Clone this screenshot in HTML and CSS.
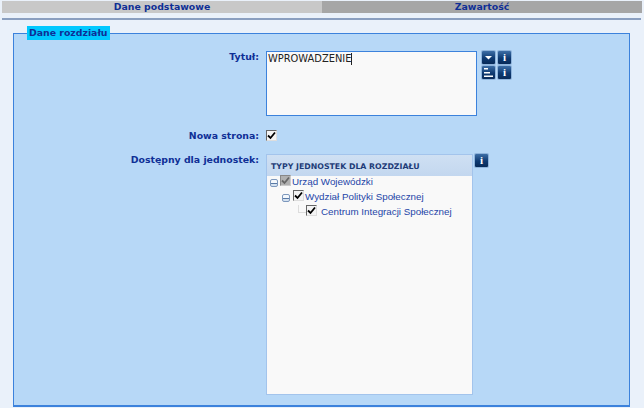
FILE: index.html
```html
<!DOCTYPE html>
<html lang="pl">
<head>
<meta charset="utf-8">
<title>Dane rozdziału</title>
<link rel="stylesheet" href="styles.css">
</head>
<body>
<div class="tabs">
  <div class="tab tab-active">Dane podstawowe</div>
  <div class="tab tab-other">Zawartość</div>
</div>
<div class="rule"></div>
<fieldset class="group">
  <legend class="legend">Dane rozdziału</legend>
  <div class="row row-title">
    <div class="label">Tytuł:</div>
    <div class="textarea"><span class="value">WPROWADZENIE</span><span class="caret"></span></div>
    <div class="tools">
      <div class="tool-row">
        <span class="btn"><svg width="13" height="13" viewBox="0 0 13 13"><path d="M3 5h7L6.500 8.500z" fill="#fff"/></svg></span>
        <span class="btn btn-i">i</span>
      </div>
      <div class="tool-row">
        <span class="btn"><svg width="13" height="13" viewBox="0 0 13 13"><path d="M2 2h4v1.500H2zM2 6h6v1.500H2zM2 9.500h9V11H2z" fill="#fff"/></svg></span>
        <span class="btn btn-i">i</span>
      </div>
    </div>
  </div>
  <div class="row row-new">
    <div class="label">Nowa strona:</div>
    <span class="check"><svg width="9" height="9" viewBox="0 0 9 9"><path d="M1 4.500 3.500 7 8 1.500" fill="none" stroke="#000" stroke-width="1.800"/></svg></span>
  </div>
  <div class="row row-tree">
    <div class="label">Dostępny dla jednostek:</div>
    <div class="panel">
      <div class="panel-head">TYPY JEDNOSTEK DLA ROZDZIAŁU</div>
      <div class="panel-body">
        <div class="node">
          <span class="exp"></span>
          <span class="check check-off"><svg width="9" height="9" viewBox="0 0 9 9"><path d="M1 4.500 3.500 7 8 1.500" fill="none" stroke="#666" stroke-width="1.800"/></svg></span>
          <span class="node-text">Urząd Wojewódzki</span>
        </div>
        <div class="node node-2">
          <span class="exp"></span>
          <span class="check"><svg width="9" height="9" viewBox="0 0 9 9"><path d="M1 4.500 3.500 7 8 1.500" fill="none" stroke="#000" stroke-width="1.800"/></svg></span>
          <span class="node-text">Wydział Polityki Społecznej</span>
        </div>
        <div class="node node-3">
          <span class="leaf"></span>
          <span class="check"><svg width="9" height="9" viewBox="0 0 9 9"><path d="M1 4.500 3.500 7 8 1.500" fill="none" stroke="#000" stroke-width="1.800"/></svg></span>
          <span class="node-text node-text-3">Centrum Integracji Społecznej</span>
        </div>
      </div>
    </div>
    <span class="btn btn-i btn-panel">i</span>
  </div>
</fieldset>
</body>
</html>
```
FILE: styles.css
```css
* { box-sizing: border-box; }
html, body { margin: 0; height: 408px; overflow: hidden; }
body {
  background: #eaf1fa;
  padding: 1px 2px 0 2px;
  font-family: "DejaVu Sans", Verdana, sans-serif;
  font-size: 9.35px;
  color: #0f2f96;
}
.tabs { display: flex; height: 12px; }
.tab {
  flex: 1;
  text-align: center;
  font-weight: bold;
  line-height: 12px;
}
.tab-active { background: #c8c8c8; }
.tab-other { background: #a6a6a6; }
.rule { height: 2px; margin-top: 5px; margin-right: 1px; background: #8a9fc0; }
.group {
  margin: 6px 12px 0 11px;
  padding: 0;
  height: 381px;
  border: 1px solid #3c82dc;
  border-bottom-width: 2px;
  background: #b7d8f7;
  min-width: 0;
}
.legend {
  margin-left: 13px;
  padding: 0 2px;
  height: 14px;
  line-height: 13px;
  font-size: 9.35px;
  font-weight: bold;
  background: #00c8ff;
}
.row { display: flex; align-items: flex-start; }
.label {
  width: 245px;
  margin-right: 7px;
  text-align: right;
  font-weight: bold;
  line-height: 11px;
}
.row-title { margin-top: 11px; }
.textarea {
  width: 211px;
  height: 65px;
  background: #f9f9f9;
  border: 1px solid #3c82dc;
  padding: 1px;
  font-size: 9.9px;
  color: #222;
  line-height: 12px;
  display: flex;
  align-items: flex-start;
}
.caret { width: 1px; height: 12px; background: #222; }
.tools { margin-left: 5px; display: flex; flex-direction: column; gap: 2px; }
.tool-row { display: flex; gap: 3px; }
.btn {
  width: 13px;
  height: 13px;
  display: flex;
  align-items: center;
  justify-content: center;
  flex: none;
  border-radius: 1px;
  background: linear-gradient(#3d6ea6, #0e3a72 55%, #082a58);
  box-shadow: 0 0 0 1px #8fb4dc;
  color: #fff;
}
.btn-i {
  font-family: "Liberation Serif", serif;
  font-size: 11px;
  font-weight: bold;
  line-height: 13px;
}
.row-new { margin-top: 14px; height: 12px; }
.check {
  width: 11px;
  height: 11px;
  display: flex;
  align-items: center;
  justify-content: center;
  flex: none;
  border: 1px solid #666;
  border-right-color: #ddd;
  border-bottom-color: #ddd;
  background: #f4f4f4;
}
.check-off { background: #b0b0b0; border-color: #888 #ccc #ccc #888; }
.row-tree { margin-top: 12px; }
.panel {
  width: 207px;
  height: 241px;
  background: #f9f9f9;
  border: 1px solid #a3c4ec;
  display: flex;
  flex-direction: column;
}
.panel-head {
  height: 21px;
  padding: 6px 4px 0;
  font-size: 7.800px;
  font-weight: bold;
  line-height: 12px;
  color: #1f3c78;
  background: linear-gradient(#cfe0f3, #c3d7ef);
}
.panel-body {
  flex: 1;
  font-family: "Liberation Sans", Arial, sans-serif;
  font-size: 9.800px;
}
.node { display: flex; align-items: flex-start; height: 15px; padding-left: 3px; }
.node-2 { padding-left: 15px; }
.node-3 { padding-left: 31px; }
.node .check { margin-top: -1px; }
.exp {
  width: 8px;
  height: 8px;
  margin-top: 3px;
  margin-right: 2px;
  flex: none;
  background: linear-gradient(#f4f8fc 0 3px, #5a7aa6 3px 4px, #d5e2f0 4px);
  border: 1px solid #7d98bd;
  border-radius: 2px;
}
.node-2 .exp { margin-right: 3px; }
.leaf {
  width: 8px;
  height: 8px;
  margin-top: -1px;
  flex: none;
  border-left: 1px solid #ddd;
  border-bottom: 1px solid #ddd;
}
.node-text { margin-left: 1px; color: #2546a8; line-height: 12px; white-space: nowrap; }
.node-text-3 { margin-left: 4px; }
.btn-panel { margin-left: 2px; }
```
